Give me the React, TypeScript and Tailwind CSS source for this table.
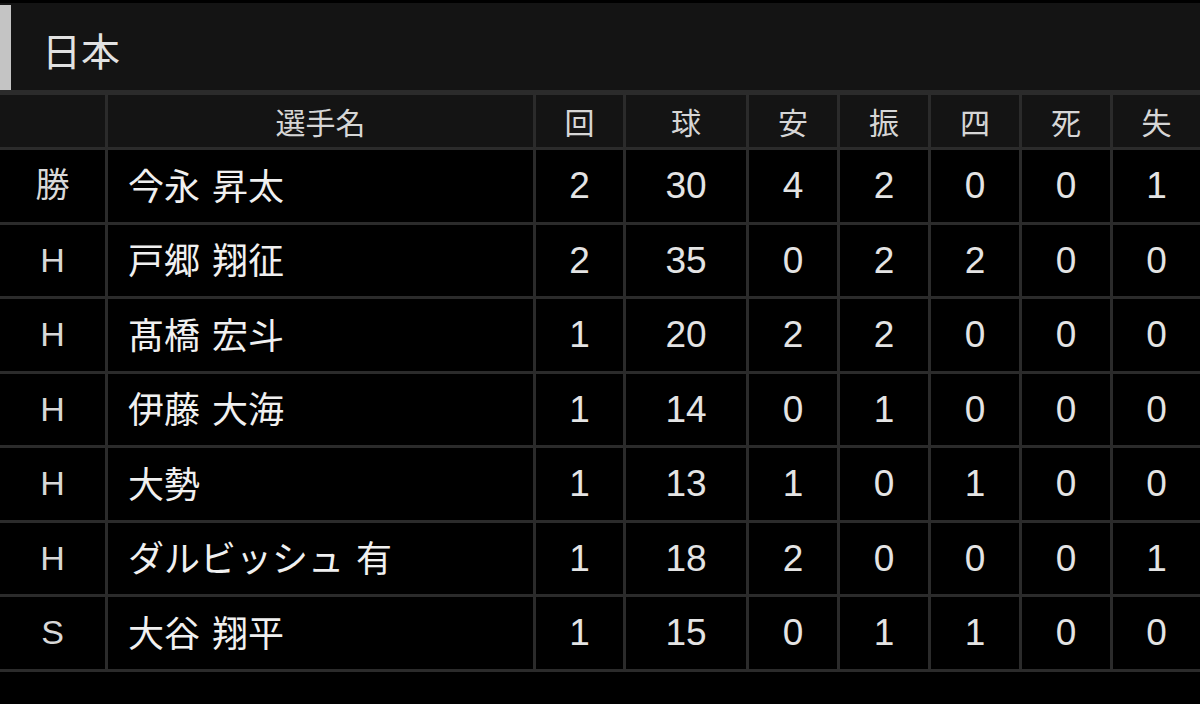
const headers = ["", "選手名", "回", "球", "安", "振", "四", "死", "失"];

const rows = [
  { mark: "勝", name: "今永 昇太", stats: [2, 30, 4, 2, 0, 0, 1] },
  { mark: "H", name: "戸郷 翔征", stats: [2, 35, 0, 2, 2, 0, 0] },
  { mark: "H", name: "髙橋 宏斗", stats: [1, 20, 2, 2, 0, 0, 0] },
  { mark: "H", name: "伊藤 大海", stats: [1, 14, 0, 1, 0, 0, 0] },
  { mark: "H", name: "大勢", stats: [1, 13, 1, 0, 1, 0, 0] },
  { mark: "H", name: "ダルビッシュ 有", stats: [1, 18, 2, 0, 0, 0, 1] },
  { mark: "S", name: "大谷 翔平", stats: [1, 15, 0, 1, 1, 0, 0] },
];

const font = "font-['Liberation_Sans','Noto_Sans_CJK_JP',sans-serif]";

export default function App() {
  return (
    <div className={`w-[1200px] h-[704px] bg-black overflow-hidden ${font}`}>
      {/* TEAM HEADER */}
      <div className="pt-[3px]">
        <div className="h-[87px] bg-[#141414] flex items-center">
          <div className="w-[11px] h-[85px] mt-[2px] self-start bg-[#c4c4c4]" />
          <div className="pl-[31px] pt-[6px] text-[39px] text-[#e2e2e2] font-['Noto_Sans_CJK_JP',sans-serif]">
            日本
          </div>
        </div>
      </div>

      {/* PITCHING TABLE */}
      <div className="bg-[#2b2b2b] pt-[5px] pb-[3px] grid grid-cols-[105px_425px_87px_120px_88px_88px_88px_88px_1fr] auto-rows-[71.5px] grid-rows-[52px] gap-[3px]">
        {headers.map((h, i) => (
          <div
            key={i}
            className="bg-[#141414] flex items-center justify-center text-[30px] text-[#d6d6d6] font-['Noto_Sans_CJK_JP',sans-serif]"
          >
            {h}
          </div>
        ))}
        {rows.map((row, r) => (
          <div key={r} className="contents">
            <div className="bg-black flex items-center justify-center text-[34px] text-[#d8d8d8]">
              {row.mark}
            </div>
            <div className="bg-black flex items-center pl-[20px] pb-[4px] text-[36px] text-[#f0f0f0] font-['Noto_Sans_CJK_JP',sans-serif] [word-spacing:4px]">
              {row.name}
            </div>
            {row.stats.map((s, i) => (
              <div
                key={i}
                className="bg-black flex items-center justify-center text-[37px] text-[#e4e4e4]"
              >
                {s}
              </div>
            ))}
          </div>
        ))}
      </div>
    </div>
  );
}
